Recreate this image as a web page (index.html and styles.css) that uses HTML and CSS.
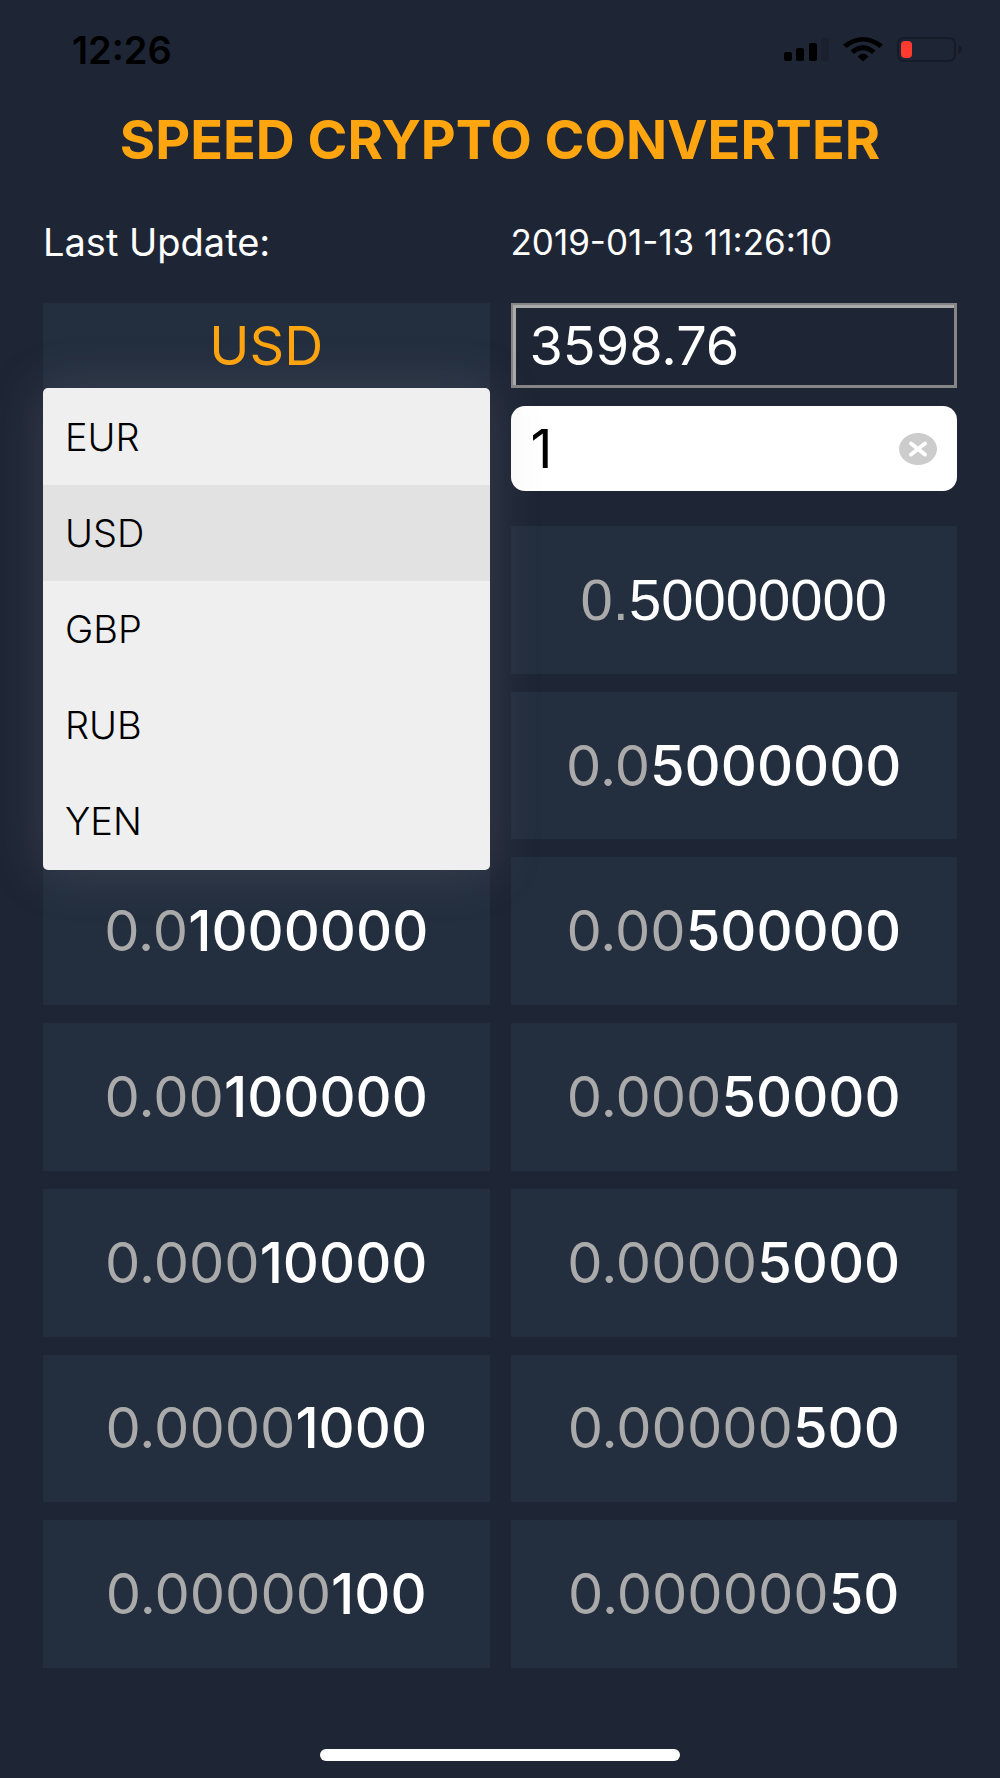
FILE: index.html
```html
<!DOCTYPE html>
<html lang="en">
<head>
<meta charset="utf-8">
<meta name="viewport" content="width=device-width, initial-scale=1">
<title>Speed Crypto Converter</title>
<link rel="stylesheet" href="styles.css">
</head>
<body>
<header class="status">
  <time class="clock">12:26</time>
  <svg class="status-icons" width="182" height="30" viewBox="0 0 182 30" aria-hidden="true">
    <rect x="0" y="17" width="8" height="9" rx="2"/>
    <rect x="12" y="13" width="8" height="13" rx="2"/>
    <rect x="25" y="8" width="8" height="18" rx="2"/>
    <rect x="37" y="3" width="8" height="23" rx="2" fill="#1a202d"/>
    <path d="M59 9.500Q79-5.500 99 9.500L95.500 13Q79 0 62.500 13Z"/>
    <path d="M66.500 15.500Q79 5 91.500 15.500L88 19Q79 11.500 70 19Z"/>
    <path d="M73.500 21.500Q79 15.500 84.500 21.500L79 26.500Z"/>
    <rect x="114" y="3" width="57" height="23" rx="6" fill="none" stroke="#151b27" stroke-width="2"/>
    <path d="M174.500 10Q178 12 178 14.500T174.500 19Z" fill="#151b27"/>
    <rect x="117" y="6" width="11" height="17" rx="4" fill="#ff3b30"/>
  </svg>
</header>
<main class="app">
  <h1 class="title">SPEED CRYPTO CONVERTER</h1>
  <div class="update">
    <span class="update-label">Last Update:</span>
    <time class="update-time">2019-01-13 11:26:10</time>
  </div>
  <form class="fields">
    <div class="currency">
      <select class="currency-select" aria-label="Currency">
        <option>EUR</option>
        <option selected>USD</option>
        <option>GBP</option>
        <option>RUB</option>
        <option>YEN</option>
      </select>
      <div class="menu" role="listbox" aria-label="Currencies">
        <button type="button" class="menu-item" role="option">EUR</button>
        <button type="button" class="menu-item menu-item-active" role="option" aria-selected="true">USD</button>
        <button type="button" class="menu-item" role="option">GBP</button>
        <button type="button" class="menu-item" role="option">RUB</button>
        <button type="button" class="menu-item" role="option">YEN</button>
      </div>
    </div>
    <input class="rate" type="text" aria-label="Rate" value="3598.76">
    <div class="amount">
      <input class="amount-input" type="text" aria-label="Amount" value="1">
      <button type="button" class="clear" aria-label="Clear">
        <svg class="clear-icon" width="38" height="32" viewBox="0 0 38 32" aria-hidden="true">
          <ellipse cx="19" cy="16" rx="19" ry="16" fill="#ccc"/>
          <path d="M12 10.500L26 21.500M26 10.500L12 21.500" stroke="#fff" stroke-width="4" stroke-linecap="round"/>
        </svg>
      </button>
    </div>
  </form>
  <div class="steps">
    <button type="button" class="step step-right step-first"><span class="value"><span class="zeros">0.</span>50000000</span></button>
    <button type="button" class="step step-right"><span class="value"><span class="zeros">0.0</span>5000000</span></button>
    <button type="button" class="step"><span class="value"><span class="zeros">0.0</span>1000000</span></button>
    <button type="button" class="step"><span class="value"><span class="zeros">0.00</span>500000</span></button>
    <button type="button" class="step"><span class="value"><span class="zeros">0.00</span>100000</span></button>
    <button type="button" class="step"><span class="value"><span class="zeros">0.000</span>50000</span></button>
    <button type="button" class="step"><span class="value"><span class="zeros">0.000</span>10000</span></button>
    <button type="button" class="step"><span class="value"><span class="zeros">0.0000</span>5000</span></button>
    <button type="button" class="step"><span class="value"><span class="zeros">0.0000</span>1000</span></button>
    <button type="button" class="step"><span class="value"><span class="zeros">0.00000</span>500</span></button>
    <button type="button" class="step"><span class="value"><span class="zeros">0.00000</span>100</span></button>
    <button type="button" class="step"><span class="value"><span class="zeros">0.000000</span>50</span></button>
  </div>
</main>
<footer class="home"><div class="home-bar"></div></footer>
</body>
</html>
```
FILE: styles.css
```css
* {
  box-sizing: border-box;
}

body {
  margin: 0;
  min-height: 100vh;
  display: flex;
  flex-direction: column;
  background: #1e2636;
  color: #fff;
  font-family: Inter, "Liberation Sans", sans-serif;
}

button,
input,
select {
  margin: 0;
  border: 0;
  border-radius: 0;
  font-family: inherit;
  color: inherit;
  appearance: none;
}

.status {
  height: 100px;
  padding: 0 34px 0 72px;
  display: flex;
  align-items: center;
  justify-content: space-between;
  color: #000;
}

.clock {
  font-size: 38px;
  font-weight: 600;
}

.app {
  flex: 1;
  display: flex;
  flex-direction: column;
  padding: 0 43px;
}

.title {
  margin: 0;
  line-height: 80px;
  font-size: 54px;
  font-weight: 700;
  text-align: center;
  white-space: nowrap;
  color: #ffa50f;
}

.update {
  height: 123px;
  display: grid;
  grid-template-columns: repeat(2, minmax(0, 1fr));
  column-gap: 21px;
  align-items: center;
}

.update-label {
  font-size: 38px;
}

.update-time {
  font-size: 35px;
}

.fields {
  display: grid;
  grid-template-columns: repeat(2, minmax(0, 1fr));
  gap: 18px 21px;
}

.currency {
  position: relative;
}

.currency-select {
  display: block;
  width: 100%;
  height: 85px;
  background: #232e3f;
  color: #ffa50f;
  font-size: 54px;
  text-align: center;
  text-align-last: center;
}

.menu {
  position: absolute;
  z-index: 1;
  top: 100%;
  left: 0;
  width: 100%;
  padding: 1px 0;
  border-radius: 5px;
  background: #efefef;
  box-shadow: 0 0 50px rgba(140, 130, 135, 0.25);
}

.menu-item {
  display: block;
  width: 100%;
  height: 96px;
  padding: 0 22px;
  background: none;
  color: #000;
  font-size: 38px;
  font-weight: 300;
  text-align: left;
}

.menu-item-active {
  background: #e2e2e2;
}

.rate {
  width: 100%;
  height: 85px;
  padding: 0 17px;
  border: 2px solid #858585;
  border-width: 2px 3px 3px 2px;
  background: none;
  box-shadow: inset 3px 3px #a9a9a9;
  font-size: 54px;
}

.amount {
  grid-column: 2;
  height: 85px;
  padding: 0 20px;
  display: flex;
  align-items: center;
  border-radius: 14px;
  background: #fff;
}

.amount-input {
  flex: 1;
  min-width: 0;
  height: 100%;
  padding: 0;
  background: none;
  color: #000;
  font-size: 54px;
  outline: 0;
}

.clear {
  padding: 0;
  background: none;
}

.clear-icon {
  display: block;
}

.steps {
  flex: 1;
  margin-top: 35px;
  display: grid;
  grid-template-columns: repeat(2, minmax(0, 1fr));
  grid-auto-rows: 1fr;
  gap: 18px 21px;
}

.step {
  padding: 0;
  background: #232e3f;
  font-size: 56px;
  font-weight: 500;
}

.step-right {
  grid-column: 2;
}

.step-first {
  font-family: "Liberation Sans", sans-serif;
  font-size: 58px;
}

.zeros {
  color: #aaa;
  font-weight: 400;
}

.home {
  height: 110px;
  padding-bottom: 17px;
  display: flex;
  align-items: flex-end;
  justify-content: center;
}

.home-bar {
  width: 36%;
  height: 12px;
  border-radius: 6px;
  background: #fff;
}
```
